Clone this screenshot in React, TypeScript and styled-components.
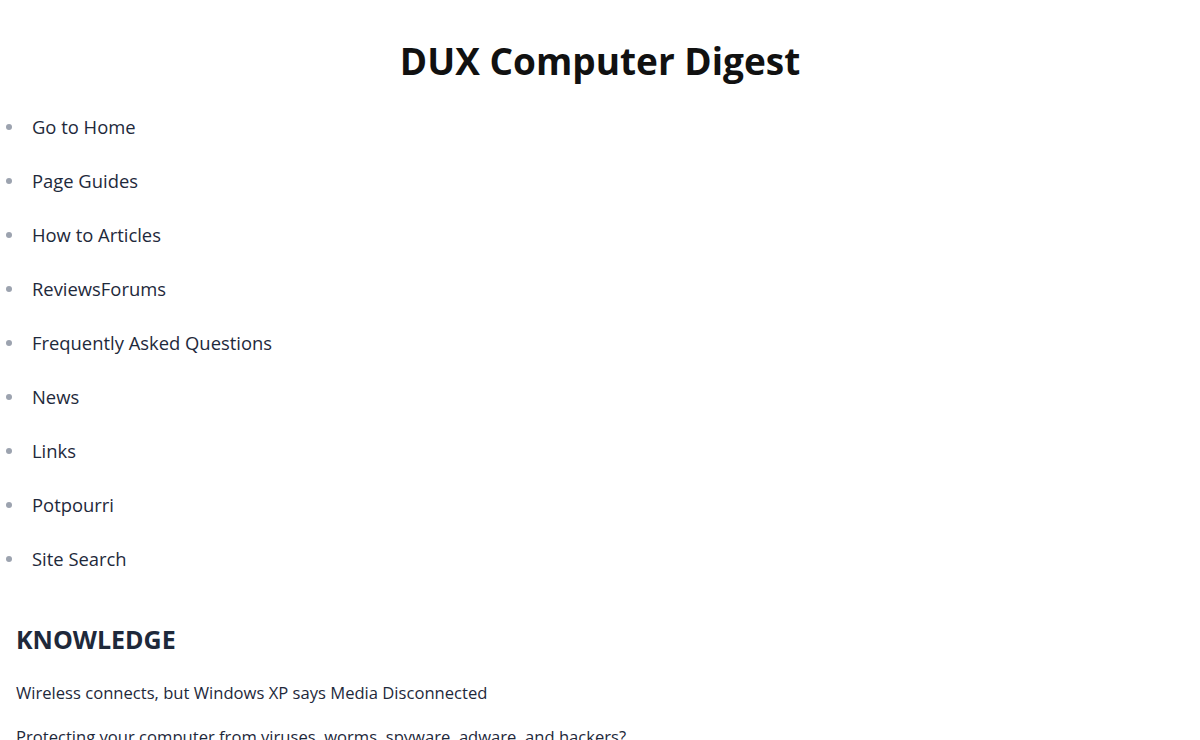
import styled, { createGlobalStyle } from 'styled-components';

const GlobalStyle = createGlobalStyle`
	html, body {
		margin: 0;
		padding: 0;
		background: #ffffff;
		font-family: 'Open Sans', 'Noto Sans', sans-serif;
		color: #1e293b;
	}
`;

const Page = styled.div`
	padding-top: 39px;
`;

const Title = styled.h1`
	margin: 0 0 30px;
	text-align: center;
	font-size: 37px;
	line-height: 44px;
	font-weight: 700;
	color: #111111;
`;

const NavList = styled.ul`
	margin: 0;
	padding: 0 0 0 32px;
	list-style: none;
	display: flex;
	flex-direction: column;
	gap: 27px;
`;

const NavItem = styled.li`
	font-size: 18.4px;
	line-height: 27px;
	color: #1e293b;
	display: flex;
	align-items: center;

	&::before {
		content: '';
		width: 6px;
		height: 6px;
		border-radius: 50%;
		background: #9ca3af;
		margin-left: -26px;
		margin-right: 20px;
		flex-shrink: 0;
	}
`;

const Section = styled.section`
	padding: 0 16px;
	margin-top: 51px;
`;

const SectionTitle = styled.h2`
	margin: 0 0 26px;
	font-size: 25px;
	line-height: 32px;
	font-weight: 700;
	color: #1e293b;
`;

const Article = styled.p`
	margin: 0 0 20px;
	font-size: 16.6px;
	line-height: 24px;
	color: #1e293b;
`;

const navItems = [
	'Go to Home',
	'Page Guides',
	'How to Articles',
	'ReviewsForums',
	'Frequently Asked Questions',
	'News',
	'Links',
	'Potpourri',
	'Site Search',
];

const articles = [
	'Wireless connects, but Windows XP says Media Disconnected',
	'Protecting your computer from viruses, worms, spyware, adware, and hackers?',
];

const App: React.FC = () => {
	return (
		<>
			<GlobalStyle />
			<Page>
				<Title>DUX Computer Digest</Title>
				<NavList>
					{navItems.map((item) => (
						<NavItem key={item}>{item}</NavItem>
					))}
				</NavList>
				<Section>
					<SectionTitle>KNOWLEDGE</SectionTitle>
					{articles.map((a) => (
						<Article key={a}>{a}</Article>
					))}
				</Section>
			</Page>
		</>
	);
};

export default App;
